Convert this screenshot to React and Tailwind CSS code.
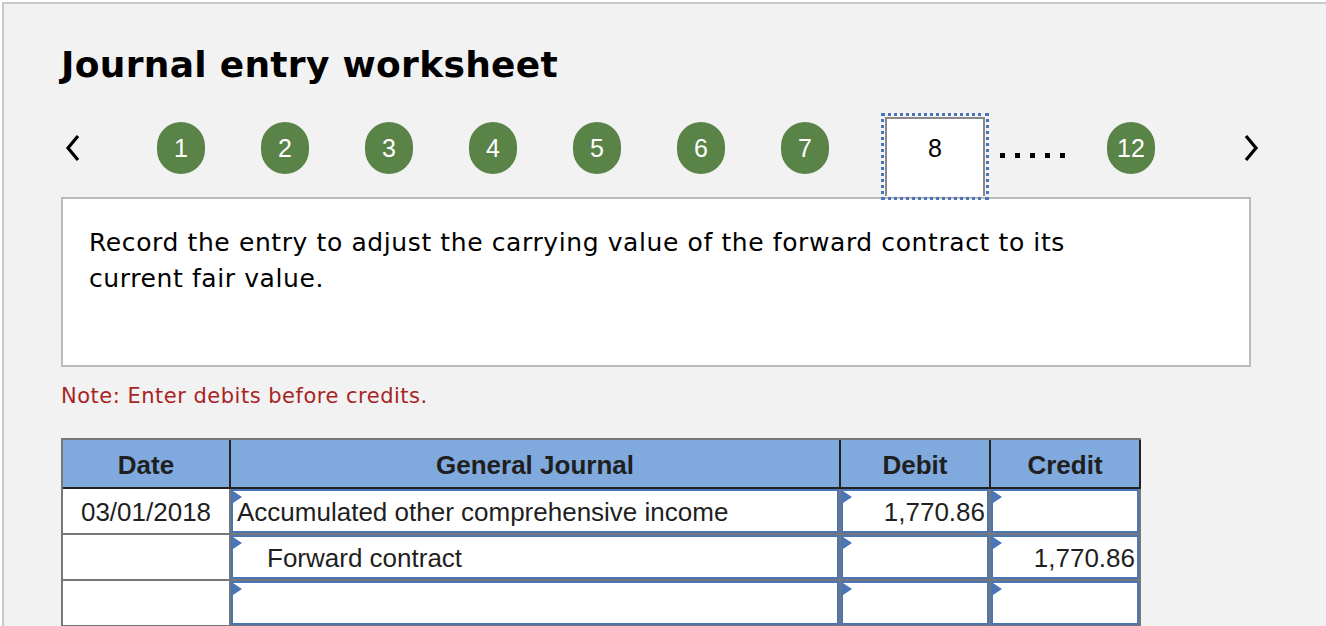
import React from 'react';

const GREEN = 'bg-[#5a8348]';

const Step = ({ n, className = '' }) => (
    <div
        className={`${GREEN} ${className} mt-[9px] flex h-[52px] w-[48px] shrink-0 items-center justify-center rounded-full text-[25px] leading-none text-white`}
        style={{ fontFamily: '"Liberation Sans", Arial, sans-serif' }}
    >
        {n}
    </div>
);

const Flag = () => (
    <span className="absolute left-0 top-0 h-0 w-0 border-y-[6px] border-l-[9px] border-y-transparent border-l-[#4a76b8]" />
);

const InputCell = ({ width, children, align = 'left', indent = false }) => (
    <div className={`${width} h-full shrink-0 border-r-2 border-[#777]`}>
        <div
            className={`relative flex h-full items-center border-2 border-[#4a76b8] bg-white pt-[2px] ${
                align === 'right' ? 'justify-end pr-[2px]' : indent ? 'pl-[34px]' : 'pl-[4px]'
            }`}
        >
            <Flag />
            {children}
        </div>
    </div>
);

const rows = [
    { date: '03/01/2018', account: 'Accumulated other comprehensive income', debit: '1,770.86', credit: '' },
    { date: '', account: 'Forward contract', indent: true, debit: '', credit: '1,770.86' },
    { date: '', account: '', debit: '', credit: '' },
];

export default function App() {
    const arial = { fontFamily: '"Liberation Sans", Arial, Helvetica, sans-serif' };
    const verdana = { fontFamily: '"DejaVu Sans", Verdana, sans-serif' };

    return (
        <div className="h-[626px] w-full overflow-hidden bg-white pl-[2px] pt-[2px]">
            <div className="h-[700px] w-[1400px] border-l-2 border-t-2 border-[#c8c8c8] bg-[#f2f2f2] pl-[57px] pt-[41px]">
                <h1 className="text-[36px] font-bold leading-[40px] tracking-[0.3px] text-black" style={verdana}>
                    Journal entry worksheet
                </h1>

                {/* step navigation */}
                <div className="relative z-10 mt-[28px] flex h-[87px] items-start">
                    <svg className="ml-[4px] mt-[21px] shrink-0" width="16" height="28" viewBox="0 0 16 28">
                        <polyline points="13,2 3,14 13,26" fill="none" stroke="#000" strokeWidth="3.2" />
                    </svg>
                    <Step n="1" className="ml-[76px]" />
                    <Step n="2" className="ml-[56px]" />
                    <Step n="3" className="ml-[56px]" />
                    <Step n="4" className="ml-[56px]" />
                    <Step n="5" className="ml-[56px]" />
                    <Step n="6" className="ml-[56px]" />
                    <Step n="7" className="ml-[56px]" />
                    <div className="ml-[52px] h-[87px] w-[108px] shrink-0 border-[3px] border-dotted border-[#4a76b8] p-[1px]">
                        <div
                            className="flex h-full justify-center border-2 border-b-0 border-[#888] bg-white pt-[14px] text-[25px] leading-[30px] text-black"
                            style={arial}
                        >
                            8
                        </div>
                    </div>
                    <div className="ml-[11px] mt-[40px] flex gap-[10px]">
                        {[0, 1, 2, 3, 4].map(i => (
                            <span key={i} className="h-[5px] w-[5px] bg-black" />
                        ))}
                    </div>
                    <Step n="12" className="ml-[42px]" />
                    <svg className="ml-[88px] mt-[21px] shrink-0" width="16" height="28" viewBox="0 0 16 28">
                        <polyline points="3,2 13,14 3,26" fill="none" stroke="#000" strokeWidth="3.2" />
                    </svg>
                </div>

                {/* question */}
                <div
                    className="mt-[-3px] h-[170px] w-[1190px] border-2 border-[#bbb] bg-white px-[26px] pt-[26px] text-[25px] leading-[36px] tracking-[0.6px] text-black"
                    style={verdana}
                >
                    Record the entry to adjust the carrying value of the forward contract to its
                    <br />
                    current fair value.
                </div>

                <p className="mt-[16px] text-[21px] leading-[26px] tracking-[0.5px] text-[#a82424]" style={verdana}>
                    Note: Enter debits before credits.
                </p>

                {/* journal table */}
                <div className="mt-[29px] w-[1080px] border-l-2 border-t-2 border-[#777] text-[26px] text-[#1f1f1f]" style={arial}>
                    <div className="flex h-[49px] border-b-2 border-[#222] bg-[#80a9de] font-bold">
                        <div className="flex w-[168px] items-center justify-center border-r-2 border-[#222] pt-[3px]">Date</div>
                        <div className="flex w-[610px] items-center justify-center border-r-2 border-[#222] pt-[3px]">General Journal</div>
                        <div className="flex w-[150px] items-center justify-center border-r-2 border-[#222] pt-[3px]">Debit</div>
                        <div className="flex w-[150px] items-center justify-center border-r-2 border-[#222] pt-[3px]">Credit</div>
                    </div>
                    {rows.map((r, i) => (
                        <div key={i} className="flex h-[46px] border-b-2 border-[#777] bg-[#777]">
                            <div className="flex w-[168px] shrink-0 items-center justify-center border-r-2 border-[#777] bg-white pt-[2px]">
                                {r.date}
                            </div>
                            <InputCell width="w-[610px]" indent={r.indent}>{r.account}</InputCell>
                            <InputCell width="w-[150px]" align="right">{r.debit}</InputCell>
                            <InputCell width="w-[150px]" align="right">{r.credit}</InputCell>
                        </div>
                    ))}
                </div>
            </div>
        </div>
    );
}
